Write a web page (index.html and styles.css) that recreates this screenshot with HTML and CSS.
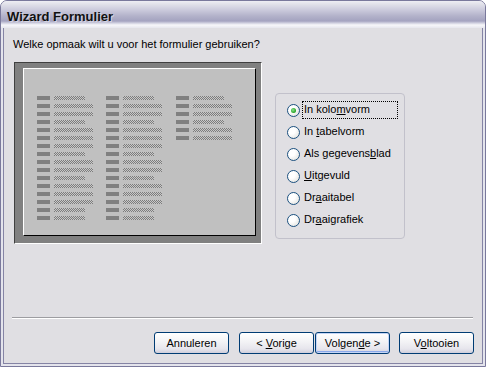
FILE: index.html
```html
<!DOCTYPE html>
<html lang="nl">
<head>
    <meta charset="UTF-8">
    <title>Wizard Formulier</title>
    <link rel="stylesheet" href="styles.css">
</head>
<body>
    <div class="window">
        <div class="titlebar">Wizard Formulier</div>
        <div class="client">
            <p class="question">Welke opmaak wilt u voor het formulier gebruiken?</p>

            <div class="main">
                <div class="preview">
                    <div class="sheet">
                        <div class="col">
                            <div class="fld"><i class="lbl"></i><i class="val"></i></div>
                            <div class="fld"><i class="lbl"></i><i class="val long"></i></div>
                            <div class="fld"><i class="lbl"></i><i class="val long"></i></div>
                            <div class="fld"><i class="lbl"></i><i class="val"></i></div>
                            <div class="fld"><i class="lbl"></i><i class="val long"></i></div>
                            <div class="fld"><i class="lbl"></i><i class="val long"></i></div>
                            <div class="fld"><i class="lbl"></i><i class="val long"></i></div>
                            <div class="fld"><i class="lbl"></i><i class="val"></i></div>
                            <div class="fld"><i class="lbl"></i><i class="val long"></i></div>
                            <div class="fld"><i class="lbl"></i><i class="val long"></i></div>
                            <div class="fld"><i class="lbl"></i><i class="val"></i></div>
                            <div class="fld"><i class="lbl"></i><i class="val long"></i></div>
                            <div class="fld"><i class="lbl"></i><i class="val long"></i></div>
                            <div class="fld"><i class="lbl"></i><i class="val long"></i></div>
                            <div class="fld"><i class="lbl"></i><i class="val"></i></div>
                            <div class="fld"><i class="lbl"></i><i class="val"></i></div>
                        </div>
                        <div class="col">
                            <div class="fld"><i class="lbl"></i><i class="val"></i></div>
                            <div class="fld"><i class="lbl"></i><i class="val long"></i></div>
                            <div class="fld"><i class="lbl"></i><i class="val long"></i></div>
                            <div class="fld"><i class="lbl"></i><i class="val"></i></div>
                            <div class="fld"><i class="lbl"></i><i class="val long"></i></div>
                            <div class="fld"><i class="lbl"></i><i class="val long"></i></div>
                            <div class="fld"><i class="lbl"></i><i class="val long"></i></div>
                            <div class="fld"><i class="lbl"></i><i class="val"></i></div>
                            <div class="fld"><i class="lbl"></i><i class="val long"></i></div>
                            <div class="fld"><i class="lbl"></i><i class="val long"></i></div>
                            <div class="fld"><i class="lbl"></i><i class="val"></i></div>
                            <div class="fld"><i class="lbl"></i><i class="val long"></i></div>
                            <div class="fld"><i class="lbl"></i><i class="val long"></i></div>
                            <div class="fld"><i class="lbl"></i><i class="val long"></i></div>
                            <div class="fld"><i class="lbl"></i><i class="val"></i></div>
                            <div class="fld"><i class="lbl"></i><i class="val"></i></div>
                        </div>
                        <div class="col">
                            <div class="fld"><i class="lbl"></i><i class="val"></i></div>
                            <div class="fld"><i class="lbl"></i><i class="val long"></i></div>
                            <div class="fld"><i class="lbl"></i><i class="val long"></i></div>
                            <div class="fld"><i class="lbl"></i><i class="val"></i></div>
                            <div class="fld"><i class="lbl"></i><i class="val long"></i></div>
                            <div class="fld"><i class="lbl"></i><i class="val long"></i></div>
                        </div>
                    </div>
                </div>

                <div class="options">
                    <label class="opt"><span class="radio checked"></span><span class="text focus">In kolo<u>m</u>vorm</span></label>
                    <label class="opt"><span class="radio"></span><span class="text">In <u>t</u>abelvorm</span></label>
                    <label class="opt"><span class="radio"></span><span class="text">Als gegevens<u>b</u>lad</span></label>
                    <label class="opt"><span class="radio"></span><span class="text"><u>U</u>itgevuld</span></label>
                    <label class="opt"><span class="radio"></span><span class="text">Dr<u>a</u>aitabel</span></label>
                    <label class="opt"><span class="radio"></span><span class="text">Dr<u>a</u>aigrafiek</span></label>
                </div>
            </div>

            <div class="sep"></div>

            <div class="buttons">
                <button class="btn cancel">Annuleren</button>
                <button class="btn prev">&lt; <u>V</u>orige</button>
                <button class="btn next default">Volgen<u>d</u>e &gt;</button>
                <button class="btn">V<u>o</u>ltooien</button>
            </div>
        </div>
    </div>
</body>
</html>
```

FILE: styles.css
```css
* {
    box-sizing: border-box;
}
body {
    margin: 0;
    font-family: "Liberation Sans", Arial, sans-serif;
    font-size: 11px;
    color: #000;
}
.window {
    width: 486px;
    height: 367px;
    display: flex;
    flex-direction: column;
    background: #e4e4ec;
    border: 1px solid #7a799c;
    border-radius: 7px 7px 0 0;
    padding: 0 2px 2px;
    overflow: hidden;
}
.titlebar {
    height: 27px;
    margin: 0 -2px;
    padding: 4px 0 0 6px;
    line-height: 23px;
    font-size: 13px;
    font-weight: bold;
    color: #111;
    text-shadow: 1px 1px 0 rgba(255, 255, 255, 0.5);
    background: linear-gradient(to bottom, #eeeef4 0, #e2e2ea 3px, #cbcadc 9px, #b3b2ca 15px, #a4a3c0 20px, #cfcfdf 22px, #f7f7fa 24px, #e6e6ee 27px);
}
.client {
    flex: 1;
    display: flex;
    flex-direction: column;
    background: #e0dfe3;
    border: 1px solid #8584a5;
    border-top: none;
    padding: 10px 8px 9px 9px;
}
.question {
    margin: 0;
    line-height: 13px;
}
.main {
    display: flex;
    align-items: flex-start;
    margin-top: 11px;
}

/* preview of the form layout */
.preview {
    margin-left: 1px;
    padding: 5px 5px 7px 8px;
    background: #808080;
    border: 1px solid;
    border-color: #404040 #fff #fff #404040;
}
.sheet {
    width: 233px;
    height: 168px;
    display: grid;
    grid-template-columns: 69px 70px auto;
    align-content: start;
    padding: 27px 0 0 13px;
    background: #c0c0c0;
    border: 1px solid;
    border-color: #fff #000 #000 #fff;
}
.fld {
    display: flex;
    height: 8px;
}
.lbl,
.val {
    display: block;
    height: 4px;
}
.lbl {
    width: 13px;
    background: #808080;
}
.val {
    width: 31px;
    margin-left: 4px;
    background: repeating-conic-gradient(#7c7c7c 0 25%, #c8c8c8 0 50%) 0 0 / 2px 2px;
}
.val.long {
    width: 39px;
}

/* option group */
.options {
    width: 130px;
    height: 146px;
    margin: 31px 0 0 13px;
    padding: 5px 0 0 11px;
    border: 1px solid #c2c1cb;
    border-radius: 4px;
}
.opt {
    display: flex;
    align-items: center;
    height: 22px;
}
.radio {
    position: relative;
    width: 13px;
    height: 13px;
    border: 1px solid #1c5180;
    border-radius: 50%;
    background: radial-gradient(circle at 30% 30%, #fff 35%, #dcdcd7 100%);
}
.radio.checked::after {
    content: "";
    position: absolute;
    left: 3px;
    top: 3px;
    width: 5px;
    height: 5px;
    border-radius: 50%;
    background: radial-gradient(circle at 40% 40%, #8fe48f, #21a121 70%);
}
.text {
    margin-left: 2px;
    padding: 1px 1px 2px;
    border: 1px dotted transparent;
    line-height: 13px;
}
.text.focus {
    width: 96px;
    border-color: #000;
}

.sep {
    margin: auto 1px 13px -1px;
    height: 2px;
    border-top: 1px solid #9d9da1;
    border-bottom: 1px solid #fff;
}
.buttons {
    display: flex;
    justify-content: flex-end;
}
.btn {
    width: 75px;
    height: 22px;
    padding: 0;
    font-family: inherit;
    font-size: 11px;
    color: #000;
    border: 1px solid #003c74;
    border-radius: 3px;
    background: linear-gradient(to bottom, #fff 0, #f4f4f6 40%, #e6e5ec 80%, #cfcedb 100%);
}
.btn.cancel {
    margin-right: 10px;
}
.btn.prev {
    margin-right: 1px;
}
.btn.next {
    margin-right: 9px;
}
.btn.default {
    box-shadow: inset 0 0 0 1px #c4d5f6, inset 0 -2px 0 0 #8aa8ea;
}
```
